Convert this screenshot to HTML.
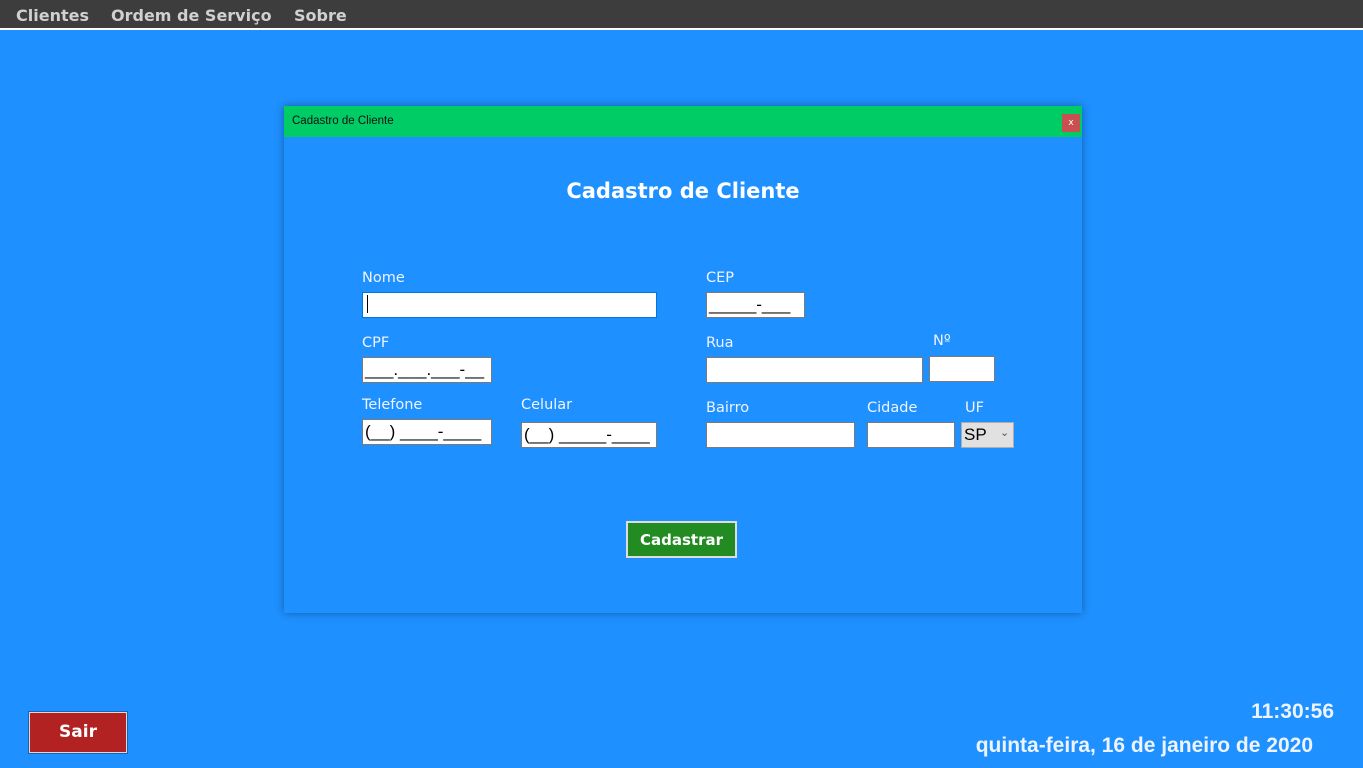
<!DOCTYPE html>
<html><head><meta charset="utf-8"><style>
*{margin:0;padding:0;box-sizing:border-box}
body{width:1363px;height:768px;background:#1e90ff;position:relative;overflow:hidden;font-family:"DejaVu Sans","Liberation Sans",sans-serif}
.menu{position:absolute;left:0;top:0;width:1363px;height:30px;background:#3d3d3d;border-bottom:2px solid #fff}
.menu span{position:absolute;top:6px;color:#d0d0d0;font-size:16px;font-weight:bold;letter-spacing:0}
.dlg{position:absolute;left:284px;top:106px;width:798px;height:507px;background:#1e90ff;box-shadow:0 0 8px rgba(0,0,0,.35)}
.tb{position:absolute;left:0;top:0;width:798px;height:31px;background:#00cc66}
.tb span{position:absolute;left:8px;top:9px;font-size:11.5px;color:#111;font-family:"Liberation Sans",sans-serif}
.x{position:absolute;left:778px;top:8px;width:18px;height:18px;background:#c85050;color:#fff;font-size:9px;text-align:center;line-height:18px}
h1{position:absolute;left:0;width:798px;top:73px;text-align:center;color:#fff;font-size:21px;font-weight:bold}
.l{position:absolute;color:#eef4ff;font-size:14.5px;font-family:"DejaVu Sans",sans-serif;margin-top:2px}
.i{position:absolute;background:#fff;border:1px solid #7a7a7a;height:26px;font-family:"Liberation Sans",sans-serif;font-size:17px;color:#000;padding:2px 0 0 2px;white-space:nowrap;overflow:hidden}
.btn{position:absolute;color:#fff;font-weight:bold;text-align:center}
.abs{position:absolute}
</style></head><body>
<div class="menu"><span style="left:16px">Clientes</span><span style="left:111px">Ordem de Serviço</span><span style="left:294px">Sobre</span></div>
<div class="dlg">
<div class="tb"><span>Cadastro de Cliente</span><div class="x">x</div></div>
<h1>Cadastro de Cliente</h1>
</div>
<div class="l" style="left:362px;top:268px">Nome</div>
<div class="i" style="left:362px;top:292px;width:295px;border-color:#0078d7"><span style="display:inline-block;width:1px;height:18px;background:#000;margin-left:2px"></span></div>
<div class="l" style="left:362px;top:333px">CPF</div>
<div class="i" style="left:362px;top:357px;width:130px">___.___.___-__</div>
<div class="l" style="left:362px;top:395px">Telefone</div>
<div class="i" style="left:362px;top:419px;width:130px">(__) ____-____</div>
<div class="l" style="left:521px;top:395px">Celular</div>
<div class="i" style="left:521px;top:422px;width:136px">(__) _____-____</div>
<div class="l" style="left:706px;top:268px">CEP</div>
<div class="i" style="left:706px;top:292px;width:99px">_____-___</div>
<div class="l" style="left:706px;top:333px">Rua</div>
<div class="i" style="left:706px;top:357px;width:217px"></div>
<div class="l" style="left:933px;top:331px">Nº</div>
<div class="i" style="left:929px;top:356px;width:66px"></div>
<div class="l" style="left:706px;top:398px">Bairro</div>
<div class="i" style="left:706px;top:422px;width:149px"></div>
<div class="l" style="left:867px;top:398px">Cidade</div>
<div class="i" style="left:867px;top:422px;width:88px"></div>
<div class="l" style="left:965px;top:398px">UF</div>
<div class="i" style="left:961px;top:422px;width:53px;background:#e1e1e1;border-color:#adadad">SP<span style="position:absolute;left:38px;top:3px;font-size:11px;color:#555">&#8964;</span></div>
<div class="btn" style="left:626px;top:521px;width:111px;height:37px;background:#228b22;border:2px solid #ddd;font-size:15px;line-height:34px">Cadastrar</div>
<div class="btn" style="left:28px;top:711px;width:100px;height:43px;background:#b22222;border:1px solid #0a66c8;box-shadow:inset 0 0 0 1px #e8d8c0;font-size:17px;line-height:41px">Sair</div>
<div class="abs" style="right:29px;top:700px;color:#eef4ff;font:bold 21px 'Liberation Sans',sans-serif">11:30:56</div>
<div class="abs" style="right:50px;top:734px;color:#eef4ff;font:bold 21px 'Liberation Sans',sans-serif">quinta-feira, 16 de janeiro de 2020</div>
</body></html>
